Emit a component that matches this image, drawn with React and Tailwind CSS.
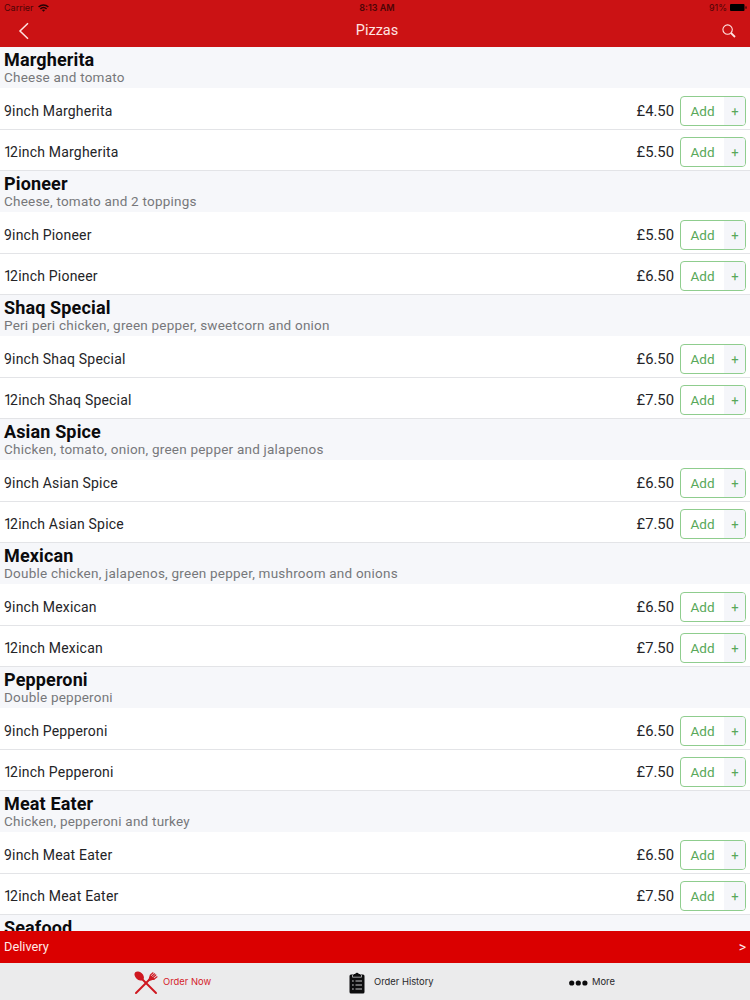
import React from "react";

const sections = [
  { name: "Margherita", description: "Cheese and tomato", prices: ["£4.50", "£5.50"] },
  { name: "Pioneer", description: "Cheese, tomato and 2 toppings", prices: ["£5.50", "£6.50"] },
  { name: "Shaq Special", description: "Peri peri chicken, green pepper, sweetcorn and onion", prices: ["£6.50", "£7.50"] },
  { name: "Asian Spice", description: "Chicken, tomato, onion, green pepper and jalapenos", prices: ["£6.50", "£7.50"] },
  { name: "Mexican", description: "Double chicken, jalapenos, green pepper, mushroom and onions", prices: ["£6.50", "£7.50"] },
  { name: "Pepperoni", description: "Double pepperoni", prices: ["£6.50", "£7.50"] },
  { name: "Meat Eater", description: "Chicken, pepperoni and turkey", prices: ["£6.50", "£7.50"] },
  { name: "Seafood", prices: [] },
];

function Header() {
  return (
    <header className="h-[47px] shrink-0 bg-[#cb1214]">
      {/* Status bar */}
      <div className="grid h-[15px] grid-cols-3 items-center pl-1 pr-[3px] font-['Inter',sans-serif] text-[9px] leading-[15px] text-[#4d0506]">
        <div className="flex items-center gap-1">
          <span>Carrier</span>
          <svg width="11" height="8" viewBox="0 0 11 8" fill="none" stroke="#250304" strokeWidth="1.5">
            <path d="M0.6 3C3.4 0.3 7.6 0.3 10.4 3" />
            <path d="M2.4 4.9C4.2 3.2 6.8 3.2 8.6 4.9" />
            <path d="M5.5 7.8 3.9 6.1C4.8 5.3 6.2 5.3 7.1 6.1Z" fill="#250304" stroke="none" />
          </svg>
        </div>
        <span className="pl-[3px] text-center font-semibold">8:13 AM</span>
        <div className="flex items-center justify-end gap-[3px]">
          <span>91%</span>
          <svg width="17" height="7" viewBox="0 0 17 7" fill="#000">
            <rect width="14.5" height="7" rx="1" />
            <rect x="15.5" y="2.2" width="1" height="2.6" rx="0.5" />
          </svg>
        </div>
      </div>
      {/* Title bar */}
      <div className="grid h-[31px] grid-cols-3 items-center text-[#ffe4e2]">
        <button className="w-fit pl-[18px]" aria-label="Back">
          <svg width="12" height="18" viewBox="0 0 12 18" fill="none" stroke="currentColor" strokeWidth="1.5">
            <path d="M10 1.2 2 9l8 7.8" />
          </svg>
        </button>
        <h1 className="pl-[4px] text-center text-[14.5px] leading-[31px]">Pizzas</h1>
        <button className="w-fit justify-self-end pr-[14px]" aria-label="Search">
          <svg width="14" height="14" viewBox="0 0 14 14" fill="none" stroke="currentColor">
            <circle cx="5.6" cy="5.6" r="4.7" strokeWidth="1.1" />
            <path d="m9 9 4 4" strokeWidth="1.8" />
          </svg>
        </button>
      </div>
    </header>
  );
}

function AddButton() {
  return (
    <button className="flex h-[30px] w-[66px] overflow-hidden rounded-[4px] border border-[#8fcd8e] text-[#58a859]">
      <span className="w-[43px] text-center text-[13.5px] leading-[29px]">Add</span>
      <span className="flex-1 bg-[#f5f6fa] pl-[1px] text-center text-[13px] leading-[29px]">+</span>
    </button>
  );
}

function Row({ size, name, price }) {
  return (
    <div className="flex h-full items-end border-b border-[#e3e4e7] pb-[3px] pl-[4px] pr-[4px] text-[14px] text-[#242427]">
      <span className="flex-1 pb-[5px] leading-[20px] tracking-[0.2px]">
        {size} {name}
      </span>
      <span className="mr-[6px] pb-[5px] text-[14.8px] leading-[20px]">{price}</span>
      <AddButton />
    </div>
  );
}

function Section({ name, description, prices }) {
  return (
    <section className="shrink-0">
      <div className="h-[41px] bg-[#f6f7fa] pl-[4px] pt-[2px]">
        <h2 className="text-[18px] font-bold leading-[21px] tracking-[0.14px] text-[#0b0b0d]">{name}</h2>
        {description && (
          <p className="text-[13.5px] leading-[14px] tracking-[0.22px] text-[#77777a]">{description}</p>
        )}
      </div>
      {prices.length > 0 && (
        <div className="grid grid-rows-[42px_41px]">
          <Row size="9inch" name={name} price={prices[0]} />
          <Row size={<><span className="tracking-[-1.8px]">1</span>2inch</>} name={name} price={prices[1]} />
        </div>
      )}
    </section>
  );
}

function TabBar() {
  return (
    <nav className="flex h-[37px] shrink-0 bg-[#ebebec] pt-[2px] font-['Inter',sans-serif] text-[9.4px] text-[#29292b]">
      <a className="ml-[134px] flex w-[215px] items-center gap-[5px] text-[#d5232b]">
        <svg width="24" height="24" viewBox="0 0 24 24" fill="none" stroke="#cf1820" strokeLinecap="round">
          <ellipse cx="5.2" cy="5" rx="5.4" ry="3.8" transform="rotate(43 5.2 5)" fill="#cf1820" stroke="none" />
          <path d="m7 7 15 15" strokeWidth="2" />
          <path d="m2 22 14-14" strokeWidth="2" />
          <path d="m15 9 1.4-5L19 1.8M17 6l3.6-3.2M18.2 7.2l3.600-3.200M15 9l5-.8 3-2.400" strokeWidth="1.2" />
          <path d="m15 9 1.8-4 3.2 2.8Z" fill="#cf1820" />
        </svg>
        Order Now
      </a>
      <a className="flex w-[220px] items-center gap-[9px]">
        <svg width="16" height="22" viewBox="0 0 16 22" fill="#0d0d0e">
          <rect x="0.5" y="2.5" width="15" height="19" rx="1.5" />
          <path d="M5 2h1.2a1.9 1.9 0 0 1 3.6 0H11v2H5z" />
          <path d="M3.5 3v2.2h9V3" fill="none" stroke="#c5c5c6" strokeWidth="0.8" />
          <path d="M3 9h1.8M3 13h1.8M3 17h1.8M6.5 9h6.5M6.5 13h6.5M6.5 17h6.5" stroke="#c5c5c6" strokeWidth="1" />
        </svg>
        Order History
      </a>
      <a className="flex items-center gap-[4px]">
        <svg width="19" height="6" viewBox="0 0 19 6" fill="#0d0d0e">
          <circle cx="2.7" cy="3" r="2.6" />
          <circle cx="9.3" cy="3" r="2.6" />
          <circle cx="15.9" cy="3" r="2.6" />
        </svg>
        More
      </a>
    </nav>
  );
}

export default function App() {
  return (
    <div className="flex h-[1000px] w-[750px] flex-col overflow-hidden bg-white font-['Roboto',sans-serif]">
      <Header />
      <main className="flex h-[884px] shrink-0 flex-col overflow-hidden">
        {sections.map((section) => (
          <Section key={section.name} {...section} />
        ))}
      </main>
      {/* Order type */}
      <div className="flex h-[32px] shrink-0 items-center justify-between bg-[#da0000] pl-[4px] pr-[4px] text-[12.8px] text-[#ffe9e6]">
        <span>Delivery</span>
        <span className="pt-[1px] text-[14px]">&gt;</span>
      </div>
      <TabBar />
    </div>
  );
}
